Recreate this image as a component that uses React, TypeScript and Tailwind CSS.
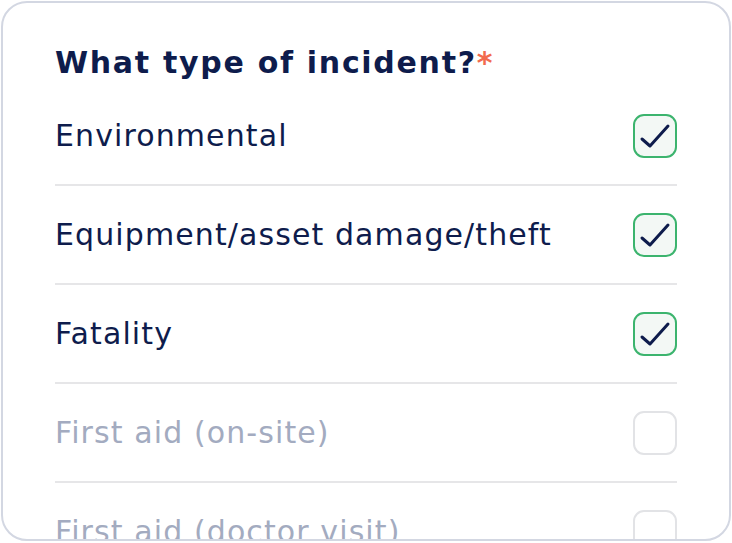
const items = [
  { label: "Environmental", checked: true },
  { label: "Equipment/asset damage/theft", checked: true },
  { label: "Fatality", checked: true },
  { label: "First aid (on-site)", checked: false },
  { label: "First aid (doctor visit)", checked: false },
];

export default function App() {
  return (
    <div className="w-[732px] h-[543px] bg-white p-px font-['DejaVu_Sans',sans-serif]">
      <div className="h-[540px] w-[730px] rounded-[26px] border-2 border-[#d3d7e2] bg-white overflow-hidden px-[52px] pt-[40px]">
        <h2 className="text-[30px] leading-[40px] font-bold text-[#0e1c4c] tracking-[1.7px] whitespace-nowrap">
          What type of incident?<span className="text-[#f26b4f]">*</span>
        </h2>
        <div className="mt-[4px]">
          {items.map((item, i) => (
            <div key={item.label}>
              {i > 0 && <div className="h-[2px] bg-[#e6e6e8]" />}
              <div className="h-[97px] flex items-center justify-between">
                <span
                  className={`text-[30px] tracking-[1.1px] whitespace-nowrap ${item.checked ? "text-[#0e1c4c]" : "text-[#a3abc0]"}`}
                >
                  {item.label}
                </span>
                {item.checked ? (
                  <div className="w-[44px] h-[44px] shrink-0 rounded-[11px] border-2 border-[#3cb46e] bg-[#f3f8f5]">
                    <svg width="40" height="40" viewBox="0 0 40 40" fill="none">
                      <path
                        d="M7 23 L15 30 L33 10"
                        stroke="#0e1c4c"
                        strokeWidth="3"
                        strokeLinecap="round"
                        strokeLinejoin="round"
                      />
                    </svg>
                  </div>
                ) : (
                  <div className="w-[44px] h-[44px] shrink-0 rounded-[11px] border-2 border-[#e2e3e6] bg-white" />
                )}
              </div>
            </div>
          ))}
        </div>
      </div>
    </div>
  );
}
